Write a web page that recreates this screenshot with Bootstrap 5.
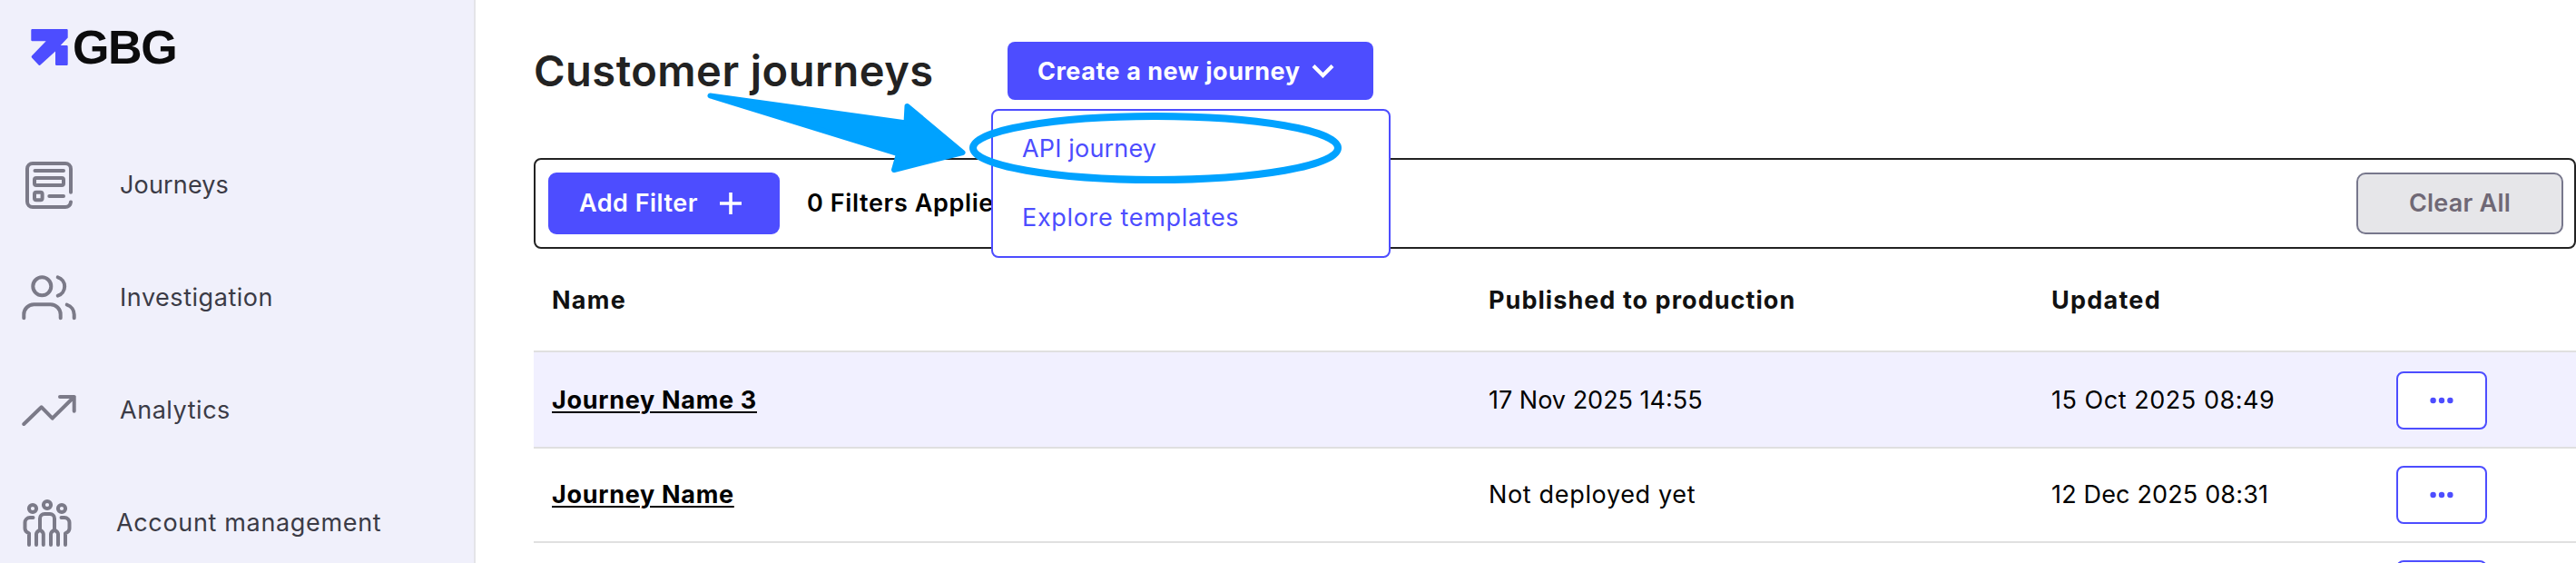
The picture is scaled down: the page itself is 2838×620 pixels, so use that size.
<!DOCTYPE html>
<html lang="en">
<head>
<meta charset="utf-8">
<title>Customer journeys</title>
<link rel="stylesheet" href="https://cdn.jsdelivr.net/npm/bootstrap@5.3.0/dist/css/bootstrap.min.css">
<script src="https://cdn.jsdelivr.net/npm/bootstrap@5.3.0/dist/js/bootstrap.bundle.min.js"></script>
<style>
:root{--brand:#4d4dff;--muted:#7b7a88}
body{font-family:Inter,"Liberation Sans",sans-serif;font-size:27px;line-height:32px;color:#000;background:#fff;height:620px;overflow:hidden}
.sidebar{width:524px;height:620px;background:#f0f0fb;border-right:2px solid #e4e4e8}
.brand-row{height:141px;padding:26px 0 0 34px}
.brand-mark{margin-top:6px}
.brand-name{font:700 52px/52px "Liberation Sans",sans-serif;letter-spacing:-1.4px;color:#0c0c0d;margin-left:5px}
.side-link{height:124px;padding:0 0 0 20px;color:#3b3b46}
.side-link:hover{color:#3b3b46}
.side-link span{padding-top:2px}
.side-link svg{width:64px;height:64px;flex:none;margin-right:48px;stroke:var(--muted);stroke-width:4;fill:none;stroke-linecap:round;stroke-linejoin:round}
.side-link svg.icon-wide{margin-right:44px}
.main-area{padding-left:64px;height:620px;overflow:hidden}
.page-head{padding-top:46px;height:174px}
.page-title{font-size:47px;line-height:63px;font-weight:600;color:#222;letter-spacing:.47px;width:522px}
.btn-brand{background:var(--brand);border:0;color:#fff;border-radius:9px;font-size:27px;line-height:32px}
.btn-create{width:403px;height:64px;padding:2px 0 0 33px;font-weight:700;letter-spacing:.53px;border-radius:8px}
.btn-create svg{margin-left:12px}
.menu-box{top:74px;left:-18px;width:440px;height:164px;padding:4px 0;border:2px solid var(--brand);border-radius:8px;margin:0}
.menu-box .dropdown-item{font-size:27px;height:76px;padding:0 0 0 32px;color:var(--brand)}
.filter-box{height:100px;border:2px solid #222;border-radius:8px;padding:0 12px 0 14px}
.btn-add{width:255px;height:68px;padding:0 0 0 34px;font-weight:600;letter-spacing:.48px}
.btn-add svg{margin-left:24px}
.filter-count{font-weight:600;letter-spacing:.62px;margin-left:30px}
.btn-clear{width:228px;height:68px;border:2px solid #77778c;border-radius:10px;background:#e6e6e9;color:#6f6875;font-size:27px;font-weight:600;letter-spacing:.25px}
.journeys{table-layout:fixed;border-collapse:separate;border-spacing:0;margin:0;color:#000}
.journeys>:not(caption)>*>*{padding:0 0 0 20px;border-bottom:2px solid #e0e0e0;background:transparent;vertical-align:middle;color:inherit;box-shadow:none}
.journeys thead tr{height:114px}
.journeys thead th{font-weight:700;color:#111;padding-top:2px}
.journeys .row-a{height:106px;background:#f1f0ff}
.journeys .row-a td{padding-top:2px}
.journeys .row-b{height:104px}
.journeys a{font-weight:700;color:#000;text-decoration:underline;text-decoration-thickness:2px;text-underline-offset:3px}
.btn-more{width:100px;height:64px;border:2px solid var(--brand);border-radius:8px;background:#fff;color:var(--brand)}
.annot{left:0;top:0;width:1600px;height:300px;z-index:1100;pointer-events:none}
.ls-0{letter-spacing:.16px}
.ls-1{letter-spacing:.54px}
.ls-2{letter-spacing:.66px}
.ls-3{letter-spacing:.7px}
.ls-4{letter-spacing:1.05px}
.ls-5{letter-spacing:1.25px}
</style>
</head>
<body>
<div class="d-flex position-relative">
  <aside class="sidebar flex-shrink-0 overflow-hidden">
    <div class="brand-row d-flex align-items-start">
      <svg class="brand-mark" width="41" height="41" viewBox="0 0 41 41"><path d="M1.500 0H39.500a1.200 1.200 0 0 1 1.200 1.200V9.500L32.700 18H39.500a1.200 1.200 0 0 1 1.200 1.200V38.800A1.200 1.200 0 0 1 39.500 40H28.200A1.200 1.200 0 0 1 27 38.800V24.500L10.500 39.600Q9.500 40.400 8.500 39.400L1 31.500Q.2 30.500 1 29.500L16.700 13.300H1.500A1.200 1.200 0 0 1 .3 12.100V1.200A1.200 1.200 0 0 1 1.500 0Z" fill="#4d4dff"/></svg>
      <span class="brand-name">GBG</span>
    </div>
    <nav class="nav flex-column flex-nowrap">
      <a class="nav-link side-link d-flex align-items-center" href="#"><svg viewBox="0 0 64 64"><path d="M58 40.700V15a6 6 0 0 0-6-6H16a6 6 0 0 0-6 6V51a6 6 0 0 0 6 6H52a6 6 0 0 0 6-5.500M18.500 17H50M34.300 45H50"/><rect x="18" y="25" width="32" height="8" rx="2"/><rect x="18" y="40.700" width="8.600" height="8.600" rx="2"/></svg><span class="ls-0">Journeys</span></a>
      <a class="nav-link side-link d-flex align-items-center" href="#"><svg viewBox="0 0 64 64"><circle cx="26.300" cy="20.300" r="10"/><path d="M43.700 10.300a10.700 10.700 0 0 1 0 20.400M6.300 55.300V51.300a11 11 0 0 1 11-11H35.700a11 11 0 0 1 11 11v4M53.700 40.600c5 1.500 8 6 8 11v3.700"/></svg><span class="ls-1">Investigation</span></a>
      <a class="nav-link side-link d-flex align-items-center" href="#"><svg viewBox="0 0 64 64"><path d="M6.300 48L25.700 29.300L37.700 41.700L61.700 18M46 18H61.700V33.700"/></svg><span class="ls-1">Analytics</span></a>
      <a class="nav-link side-link d-flex align-items-center" href="#"><svg class="icon-wide" viewBox="0 0 64 64"><circle cx="16" cy="17" r="4.100"/><circle cx="32" cy="13" r="4.100"/><circle cx="48" cy="17" r="4.100"/><path d="M16.500 27H13a5.500 5.500 0 0 0-5.500 5.500V39q0 3.500 4.500 5.300V57M47.500 27H51a5.500 5.500 0 0 1 5.500 5.500V39q0 3.500-4.500 5.300V57M24 40.500V28a5 5 0 0 1 5-5h6a5 5 0 0 1 5 5V40.500M20 57V45q0-2 4-4.500q3.800 2.500 3.800 4.500V57M36 57V45q0-2 4-4.500q4 2.500 4 4.500V57"/></svg><span class="ls-2">Account management</span></a>
    </nav>
  </aside>
  <main class="main-area flex-grow-1">
    <header class="page-head d-flex align-items-start">
      <h1 class="page-title m-0 text-nowrap">Customer journeys</h1>
      <div class="dropdown">
        <button class="btn btn-brand btn-create d-flex align-items-center" type="button"><span>Create a new journey</span>
          <svg width="26" height="18" viewBox="0 0 26 18" fill="none" stroke="#fff" stroke-width="4.200"><path d="M2 2.500L12.500 13L23 2.500"/></svg></button>
        <div class="dropdown-menu menu-box show">
          <a class="dropdown-item d-flex align-items-center" href="#"><span class="ls-0">API journey</span></a>
          <a class="dropdown-item d-flex align-items-center" href="#"><span class="ls-2">Explore templates</span></a>
        </div>
      </div>
    </header>
    <section class="filter-box d-flex align-items-center">
      <button class="btn btn-brand btn-add d-flex align-items-center" type="button"><span>Add Filter</span>
        <svg width="24" height="24" viewBox="0 0 24 24" stroke="#fff" stroke-width="3.600"><path d="M0 12H24M12 0V24"/></svg></button>
      <span class="filter-count">0 Filters Applied</span>
      <button class="btn-clear ms-auto p-0" type="button">Clear All</button>
    </section>
    <table class="table journeys w-100">
      <colgroup><col style="width:1032px"><col style="width:620px"><col style="width:380px"><col></colgroup>
      <thead><tr><th><span class="ls-5">Name</span></th><th><span class="ls-4">Published to production</span></th><th><span class="ls-5">Updated</span></th><th></th></tr></thead>
      <tbody>
        <tr class="row-a"><td><a class="ls-3" href="#">Journey Name 3</a></td><td><span>17 Nov 2025 14:55</span></td><td><span class="ls-1">15 Oct 2025 08:49</span></td><td><button class="btn-more p-0 d-flex align-items-center justify-content-center" type="button"><svg width="26" height="8" viewBox="0 0 26 8" fill="currentColor"><circle cx="3.600" cy="4" r="3.200"/><circle cx="13" cy="4" r="3.200"/><circle cx="22.400" cy="4" r="3.200"/></svg></button></td></tr>
        <tr class="row-b"><td><a class="ls-3" href="#">Journey Name</a></td><td><span class="ls-2">Not deployed yet</span></td><td><span class="ls-0">12 Dec 2025 08:31</span></td><td><button class="btn-more p-0 d-flex align-items-center justify-content-center" type="button"><svg width="26" height="8" viewBox="0 0 26 8" fill="currentColor"><circle cx="3.600" cy="4" r="3.200"/><circle cx="13" cy="4" r="3.200"/><circle cx="22.400" cy="4" r="3.200"/></svg></button></td></tr>
        <tr class="row-b"><td></td><td></td><td></td><td><button class="btn-more p-0 d-flex align-items-center justify-content-center" type="button"><svg width="26" height="8" viewBox="0 0 26 8" fill="currentColor"><circle cx="3.600" cy="4" r="3.200"/><circle cx="13" cy="4" r="3.200"/><circle cx="22.400" cy="4" r="3.200"/></svg></button></td></tr>
      </tbody>
    </table>
  </main>
  <svg class="annot position-absolute" viewBox="0 0 1600 300">
    <path d="M782.500 105.500L998.500 135.500L999.500 117L1060.500 168L985 187L990 169.500Z" fill="#00a2ff" stroke="#00a2ff" stroke-width="6" stroke-linejoin="round"/>
    <ellipse cx="1273" cy="163" rx="201" ry="35" fill="none" stroke="#00a2ff" stroke-width="8"/>
  </svg>
</div>
</body>
</html>
